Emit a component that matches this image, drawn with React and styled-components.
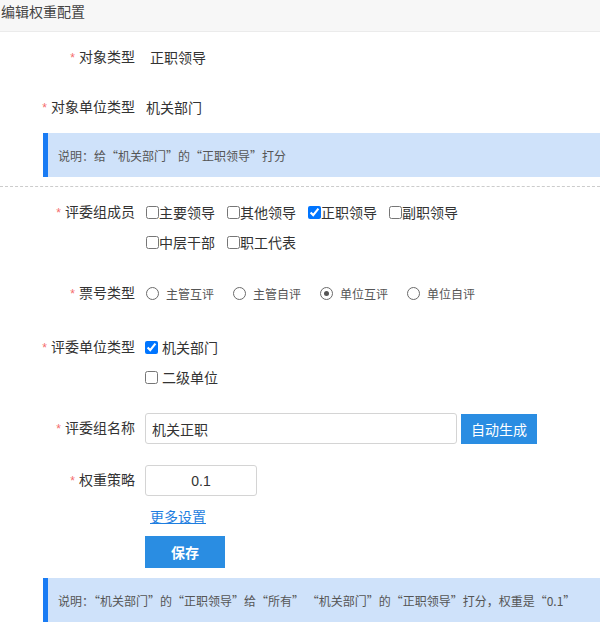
import React from 'react';
import styled, { createGlobalStyle } from 'styled-components';

const GlobalStyle = createGlobalStyle`
  html, body {
    margin: 0;
    padding: 0;
    background: #fff;
  }

  body {
    font-family: "Liberation Sans", "Noto Sans CJK SC", sans-serif;
    color: #333;
  }
`;

const Page = styled.div`
  width: 600px;
  height: 634px;
  overflow: hidden;
  background: #fff;
`;

const Header = styled.div`
  height: 31px;
  line-height: 24px;
  padding-left: 1px;
  font-size: 14px;
  color: #444;
  background: #f7f7f7;
  border-bottom: 1px solid #ebebeb;
`;

const FormItem = styled.div`
  display: flex;
  align-items: ${({ $top }) => ($top ? 'flex-start' : 'center')};
  height: ${({ $height }) => $height || 50}px;
  margin-top: ${({ $mt }) => $mt || 0}px;
`;

const Label = styled.label`
  flex: 0 0 135px;
  text-align: right;
  font-size: 14px;
  color: #333;
  line-height: 30px;

  &::before {
    content: '*';
    color: #f56c6c;
    margin-right: 4px;
    font-size: 12px;
  }
`;

const Spacer = styled.span`
  flex: 0 0 135px;
`;

const Content = styled.div`
  flex: 1;
  padding-left: ${({ $pl }) => $pl ?? 10}px;
  font-size: 14px;
  color: #333;
`;

const Notice = styled.div`
  display: flex;
  align-items: center;
  height: 44px;
  margin: ${({ $mt }) => $mt || 0}px 0 0 43px;
  padding-left: 10px;
  background: #cfe2fa;
  border-left: 5px solid #1a7cf4;
  font-family: "Noto Sans CJK SC", "Liberation Sans", sans-serif;
  font-size: 12px;
  color: #555;
  white-space: nowrap;
`;

const Divider = styled.div`
  margin-top: 9px;
  border-top: 1px dashed #ccc;
`;

const CheckGroup = styled.div`
  display: flex;
  flex-wrap: wrap;
  width: ${({ $width }) => $width || 330}px;
`;

const CheckItem = styled.label`
  display: flex;
  align-items: center;
  height: 30px;
  margin-right: ${({ $mr }) => $mr ?? 12}px;
  font-size: 14px;
  color: #333;
  white-space: nowrap;

  input {
    width: 13px;
    height: 13px;
    margin: 0 ${({ $gap }) => $gap || 0}px 0 0;
  }
`;

const RadioGroup = styled.div`
  display: flex;
  align-items: center;
`;

const RadioItem = styled.label`
  display: flex;
  align-items: center;
  height: 30px;
  margin-right: 19px;
  font-size: 12px;
  color: #555;
  white-space: nowrap;
`;

const RadioMark = styled.span`
  box-sizing: border-box;
  position: relative;
  width: 13px;
  height: 13px;
  margin-right: 7px;
  border: 1.5px solid #6b6b6b;
  border-radius: 50%;
  background: #fff;

  &::after {
    content: '';
    display: ${({ $checked }) => ($checked ? 'block' : 'none')};
    position: absolute;
    left: 50%;
    top: 50%;
    width: 5px;
    height: 5px;
    margin: -2.5px 0 0 -2.5px;
    border-radius: 50%;
    background: #555;
  }
`;

const TextInput = styled.input`
  box-sizing: border-box;
  width: ${({ $width }) => $width}px;
  height: 31px;
  padding: 0 6px;
  border: 1px solid #d4d4d4;
  border-radius: 3px;
  font-family: inherit;
  font-size: 14px;
  color: #333;
  text-align: ${({ $center }) => ($center ? 'center' : 'left')};
  outline: none;
`;

const InlineRow = styled.div`
  display: flex;
  align-items: center;
  gap: 4px;
`;

const Button = styled.button`
  height: ${({ $height }) => $height || 30}px;
  width: ${({ $width }) => $width}px;
  padding: 0;
  border: none;
  border-radius: 0;
  background: #2a8de2;
  color: #fff;
  font-family: inherit;
  font-size: 14px;
  font-weight: ${({ $bold }) => ($bold ? 700 : 400)};
  cursor: pointer;
`;

const MoreLink = styled.a`
  display: inline-block;
  margin-left: 5px;
  font-size: 14px;
  color: #1e7ee0;
  text-decoration: underline;
  line-height: 22px;
`;

const members = [
  { name: '主要领导' },
  { name: '其他领导' },
  { name: '正职领导', checked: true },
  { name: '副职领导' },
  { name: '中层干部' },
  { name: '职工代表' },
];

const voteTypes = ['主管互评', '主管自评', '单位互评', '单位自评'];

const App = () => (
  <Page>
    <GlobalStyle />
    <Header>编辑权重配置</Header>

    <FormItem>
      <Label>对象类型</Label>
      <Content $pl={15}>正职领导</Content>
    </FormItem>

    <FormItem>
      <Label>对象单位类型</Label>
      <Content $pl={11}>机关部门</Content>
    </FormItem>

    <Notice $mt={1}>说明：给“机关部门”的“正职领导”打分</Notice>

    <Divider />

    <FormItem $top $height={60} $mt={10}>
      <Label>评委组成员</Label>
      <Content $pl={11}>
        <CheckGroup>
          {members.map((m) => (
            <CheckItem key={m.name}>
              <input type="checkbox" defaultChecked={m.checked} />
              {m.name}
            </CheckItem>
          ))}
        </CheckGroup>
      </Content>
    </FormItem>

    <FormItem $mt={11}>
      <Label>票号类型</Label>
      <Content $pl={11}>
        <RadioGroup>
          {voteTypes.map((v) => (
            <RadioItem key={v}>
              <RadioMark $checked={v === '单位互评'} />
              {v}
            </RadioItem>
          ))}
        </RadioGroup>
      </Content>
    </FormItem>

    <FormItem $top $height={60} $mt={14}>
      <Label>评委单位类型</Label>
      <Content $pl={10}>
        <CheckGroup $width={200}>
          <CheckItem $gap={4} $mr={200}>
            <input type="checkbox" defaultChecked />
            机关部门
          </CheckItem>
          <CheckItem $gap={4}>
            <input type="checkbox" />
            二级单位
          </CheckItem>
        </CheckGroup>
      </Content>
    </FormItem>

    <FormItem $height={31} $mt={21}>
      <Label>评委组名称</Label>
      <Content>
        <InlineRow>
          <TextInput $width={312} defaultValue="机关正职" />
          <Button $width={76}>自动生成</Button>
        </InlineRow>
      </Content>
    </FormItem>

    <FormItem $height={31} $mt={21}>
      <Label>权重策略</Label>
      <Content>
        <TextInput $width={112} $center defaultValue="0.1" />
      </Content>
    </FormItem>

    <FormItem $height={22} $mt={10}>
      <Spacer />
      <Content>
        <MoreLink href="#">更多设置</MoreLink>
      </Content>
    </FormItem>

    <FormItem $height={32} $mt={8}>
      <Spacer />
      <Content>
        <Button $width={80} $height={32} $bold>保存</Button>
      </Content>
    </FormItem>

    <Notice $mt={10}>
      说明：“机关部门”的“正职领导”给“所有” “机关部门”的“正职领导”打分，权重是“0.1”
    </Notice>
  </Page>
);

export default App;
